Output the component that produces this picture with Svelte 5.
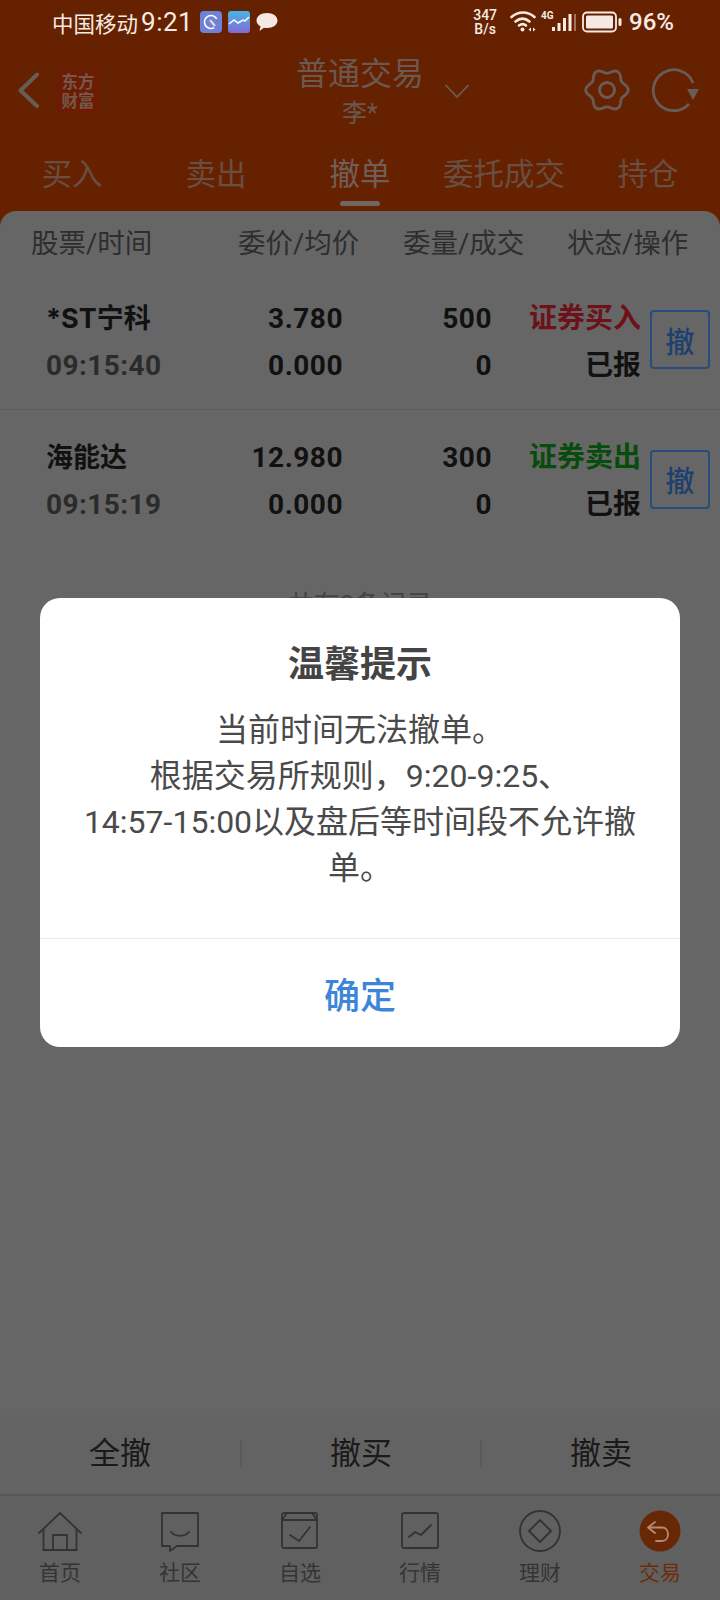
<script>
  const tabs = ['买入', '卖出', '撤单', '委托成交', '持仓'];
  const columns = ['股票/时间', '委价/均价', '委量/成交', '状态/操作'];
  const orders = [
    { name: '*ST宁科', time: '09:15:40', price: '3.780', avg: '0.000', qty: '500', done: '0', side: '证券买入', cls: 'buy' },
    { name: '海能达', time: '09:15:19', price: '12.980', avg: '0.000', qty: '300', done: '0', side: '证券卖出', cls: 'sell' }
  ];
  const actions = ['全撤', '撤买', '撤卖'];
  const nav = ['首页', '社区', '自选', '行情', '理财', '交易'];

  // six soft lobes round the centre, lobes pointing left and right
  const gearPath = Array.from({ length: 121 }, (_, i) => {
    const a = (i / 120) * Math.PI * 2;
    const r = 19 + 2.2 * Math.cos(6 * a);
    return `${i ? 'L' : 'M'}${(24 + r * Math.cos(a)).toFixed(2)} ${(23 + r * Math.sin(a)).toFixed(2)}`;
  }).join('') + 'Z';
</script>

<div class="page">
  <header class="top">
    <div class="status">
      <span class="carrier">中国移动</span>
      <span class="clock">9:21</span>
      <svg class="app" width="22" height="22" viewBox="0 0 22 22">
        <rect width="22" height="22" rx="4" fill="#6d82d8" />
        <circle cx="11" cy="11" r="6.5" fill="none" stroke="#fff" stroke-width="1.6" stroke-dasharray="30 11" transform="rotate(60 11 11)" />
        <path d="M10 9l5 6" stroke="#f2d6c8" stroke-width="2" />
      </svg>
      <svg class="app" width="22" height="22" viewBox="0 0 22 22">
        <defs>
          <linearGradient id="chart" x1="0" y1="0" x2="0" y2="1">
            <stop offset="0" stop-color="#46b6e6" />
            <stop offset="1" stop-color="#8469d6" />
          </linearGradient>
        </defs>
        <rect width="22" height="22" rx="3" fill="url(#chart)" />
        <path d="M1 13l5-4 4 3 5-3 2 1 4-4" fill="none" stroke="#fff" stroke-width="1.5" />
      </svg>
      <svg class="bubble" width="22" height="20" viewBox="0 0 22 20">
        <path d="M11 1c6 0 10.5 3 10.5 7.5S17 16 11 16c-1 0-2 0-3-.3L3.500 19l1-4.700C2 13 .5 11 .5 8.500.5 4 5 1 11 1z" fill="#f4e9e4" />
      </svg>
      <span class="grow"></span>
      <span class="speed">347<br />B/s</span>
      <svg class="wifi" width="26" height="24" viewBox="0 0 26 24" fill="none" stroke="#f7ebe4" stroke-width="2.6" stroke-linecap="round">
        <path d="M1.500 7c7-6 16-6 23 0" />
        <path d="M5.500 11.500c4.500-3.800 9.500-3.800 14 0" />
        <path d="M9 15.500c2.500-1.800 5-1.800 7 0" />
        <circle cx="12.500" cy="19.500" r="2" fill="#f7ebe4" stroke="none" />
        <path d="M21 17.500l-2.500 2 2.500 2zM23 17.500l2.500 2-2.500 2z" fill="#f7ebe4" stroke="none" />
      </svg>
      <svg class="signal" width="36" height="24" viewBox="0 0 36 24">
        <text x="0" y="9" class="net">4G</text>
        <rect x="11" y="17" width="3" height="4" fill="#f7ebe4" />
        <rect x="16.500" y="13" width="3" height="8" fill="#f7ebe4" />
        <rect x="22" y="8" width="3" height="13" fill="#f7ebe4" />
        <rect x="27.500" y="4" width="3" height="17" fill="#f7ebe4" />
        <rect x="33" y="4" width="2" height="17" fill="#a8705a" />
      </svg>
      <svg class="battery" width="40" height="22" viewBox="0 0 40 22">
        <rect x="1" y="1.500" width="33" height="19" rx="4" fill="none" stroke="#f7ebe4" stroke-width="1.8" />
        <rect x="4" y="4.500" width="27" height="13" rx="1.5" fill="#f4e9e4" />
        <rect x="36.500" y="7" width="3" height="8" rx="1.5" fill="#f7ebe4" />
      </svg>
      <span class="percent">96%</span>
    </div>

    <div class="bar">
      <svg class="back" width="24" height="38" viewBox="0 0 24 38" fill="none" stroke="#685c58" stroke-width="4" stroke-linecap="round" stroke-linejoin="round">
        <path d="M19 2.500L2.500 18.500 19 34" />
      </svg>
      <div class="logo"><span>东方</span><span>财富</span></div>
      <div class="title">
        <div class="name">普通交易</div>
        <div class="user">李*</div>
      </div>
      <svg class="caret" width="26" height="16" viewBox="0 0 26 16" fill="none" stroke="#685c58" stroke-width="1.8">
        <path d="M1.500 2L13 14 24.500 2" />
      </svg>
      <span class="grow"></span>
      <svg class="gear" width="48" height="46" viewBox="0 0 48 46" fill="none" stroke="#685c58" stroke-width="2.8">
        <path d={gearPath} />
        <circle cx="24" cy="23" r="7.5" />
      </svg>
      <svg class="refresh" width="50" height="46" viewBox="0 0 50 46" fill="none">
        <path d="M39 37A20.500 20.500 0 1 1 43 16" stroke="#685c58" stroke-width="2.8" />
        <path d="M37 22h12l-6 11z" fill="#685c58" />
      </svg>
    </div>

    <nav class="tabs">
      {#each tabs as tab, i}
        <div class="tab" class:active={i === 2}>{tab}</div>
      {/each}
    </nav>
  </header>

  <main class="panel">
    <div class="thead">
      {#each columns as col}
        <span>{col}</span>
      {/each}
    </div>

    {#each orders as o}
      <div class="row">
        <div class="cell stock">
          <b>{o.name}</b>
          <b class="time">{o.time}</b>
        </div>
        <div class="cell num price">
          <b>{o.price}</b>
          <b>{o.avg}</b>
        </div>
        <div class="cell num qty">
          <b>{o.qty}</b>
          <b>{o.done}</b>
        </div>
        <div class="cell num state">
          <b class={o.cls}>{o.side}</b>
          <b>已报</b>
        </div>
        <div class="cancel">撤</div>
      </div>
    {/each}

    <div class="count">共有2条记录</div>
    <span class="grow"></span>

    <div class="actions">
      {#each actions as a}
        <div class="action">{a}</div>
      {/each}
    </div>

    <footer class="nav">
      {#each nav as label, i}
        <div class="item" class:on={i === 5}>
          <svg width="48" height="46" viewBox="0 0 48 46" fill="none" stroke="#333" stroke-width="1.8" stroke-linejoin="round" stroke-linecap="round">
            {#if i === 0}
              <path d="M3 23L24 3l21 20" />
              <path d="M7.500 19v21h33V19M17 40V25h14v15" />
            {:else if i === 1}
              <path d="M6 3h36v33H21l-7 5v-5H6z" />
              <path d="M15 22c4 5 14 5 18 0" />
            {:else if i === 2}
              <rect x="6" y="3" width="35" height="35" rx="2" />
              <path d="M6 10l5-7h25l5 7z" />
              <path d="M14 25l9 6 11-14" />
            {:else if i === 3}
              <rect x="6" y="3" width="36" height="35" rx="2" />
              <path d="M13 27l6-5 6 3 10-10" />
            {:else if i === 4}
              <circle cx="24" cy="21" r="20" />
              <path d="M24 10l11 11-11 11-11-11z" />
            {:else}
              <circle cx="24" cy="21" r="20.500" fill="#682806" stroke="none" />
              <path d="M19 12l-7 5.500 7 5.500M12 17.500h14c8 0 8 13.500 0 13.500h-6" stroke="#b98a72" />
            {/if}
          </svg>
          <span>{label}</span>
        </div>
      {/each}
    </footer>
  </main>

  <div class="dialog">
    <h2>温馨提示</h2>
    <p>当前时间无法撤单。<br />根据交易所规则，9:20-9:25、<br />14:57-15:00以及盘后等时间段不允许撤<br />单。</p>
    <div class="ok">确定</div>
  </div>
</div>

<style>
  :global(body) {
    margin: 0;
    background: #662200;
  }

  .page {
    position: relative;
    width: 720px;
    height: 1600px;
    display: flex;
    flex-direction: column;
    overflow: hidden;
    font-family: Roboto, "Noto Sans CJK SC", sans-serif;
    color: #111;
  }

  .grow {
    flex: 1;
  }

  /* orange header, dimmed by the dialog */
  .top {
    height: 212px;
    flex: none;
    background: #662200;
    margin-bottom: -1px;
  }

  .status {
    height: 44px;
    padding: 0 46px 2px 52px;
    display: flex;
    align-items: center;
    color: #f7ebe4;
  }

  .carrier {
    font-size: 21.5px;
  }

  .clock {
    font-size: 26px;
    margin: 0 7px 0 3px;
    letter-spacing: 0.5px;
  }

  .app {
    margin-right: 6px;
  }

  .speed {
    font-size: 14px;
    font-weight: 500;
    line-height: 14px;
    text-align: center;
    margin-right: 13px;
  }

  .wifi {
    margin-right: 5px;
  }

  .net {
    font-family: Roboto, sans-serif;
    font-size: 10px;
    font-weight: 700;
    fill: #f7ebe4;
  }

  .signal {
    margin-right: 5px;
  }

  .battery {
    margin-right: 7px;
  }

  .percent {
    font-size: 24px;
    font-weight: 500;
  }

  .bar {
    height: 88px;
    padding: 0 20px 0 18px;
    display: flex;
    align-items: center;
    color: #6b5850;
  }

  .back {
    margin-right: 14px;
    margin-top: 2px;
  }

  .logo {
    width: 44px;
    height: 44px;
    border-radius: 6px;
    background: #6c1c02;
    display: flex;
    flex-direction: column;
    align-items: center;
    justify-content: center;
    margin-top: 2px;
    font-family: "Noto Sans CJK SC", sans-serif;
    font-size: 16.5px;
    font-weight: 700;
    line-height: 19px;
    color: #75584a;
  }

  .title {
    width: 128px;
    margin-left: 196px;
    text-align: center;
    padding-top: 3px;
  }

  .name {
    font-size: 32px;
    line-height: 40px;
    white-space: nowrap;
  }

  .user {
    margin-top: 5px;
    font-size: 25px;
    line-height: 30px;
  }

  .caret {
    margin-left: 20px;
    margin-top: 1px;
  }

  .gear {
    margin-right: 19px;
  }

  .tabs {
    height: 80px;
    display: grid;
    grid-template-columns: repeat(5, 1fr);
  }

  .tab {
    position: relative;
    text-align: center;
    font-size: 30.5px;
    line-height: 82px;
    color: #684e43;
  }

  .tab.active {
    color: #6f5f58;
  }

  .tab.active::after {
    content: '';
    position: absolute;
    left: 52px;
    right: 52px;
    top: 67px;
    height: 5px;
    border-radius: 3px;
    background: #706763;
  }

  .panel {
    flex: 1;
    background: #666;
    border-radius: 16px 16px 0 0;
    display: flex;
    flex-direction: column;
    min-height: 0;
  }

  .thead {
    height: 59px;
    display: grid;
    grid-template-columns: 207px 165px 164px 1fr;
    padding-left: 31px;
    align-items: center;
    font-size: 27.5px;
    color: #2e2e2e;
    white-space: nowrap;
  }

  .row {
    height: 139px;
    box-sizing: border-box;
    display: grid;
    grid-template-columns: 46px 161px 136px 149px 149px 1fr;
    align-items: center;
    font-size: 28px;
  }

  .row + .row {
    border-top: 1px solid #5c5c5c;
  }

  .cell {
    display: flex;
    flex-direction: column;
    gap: 7px;
    white-space: nowrap;
    margin-top: 5px;
  }

  .cell b {
    line-height: 40px;
    font-size: 28px;
    font-weight: 700;
  }

  .stock {
    grid-column: 2;
  }

  .num {
    text-align: right;
  }

  .stock b:first-child {
    font-family: Inter, "Noto Sans CJK SC", sans-serif;
    font-size: 27px;
  }

  .cell .time {
    color: #2b2b2b;
    letter-spacing: 0.4px;
  }

  .price b,
  .qty b {
    letter-spacing: 0.5px;
  }

  .cell .buy {
    color: #6c1218;
  }

  .cell .sell {
    color: #084c0c;
  }

  .cancel {
    width: 60px;
    height: 59px;
    box-sizing: border-box;
    margin-left: 9px;
    border: 2px solid #264d7c;
    border-radius: 4px;
    display: flex;
    align-items: center;
    justify-content: center;
    color: #1e406e;
    font-size: 29px;
    font-weight: 500;
  }

  .count {
    text-align: center;
    font-size: 26px;
    line-height: 40px;
    margin-top: 37px;
    color: #444;
  }

  .actions {
    height: 79px;
    box-sizing: border-box;
    padding-top: 25px;
    display: grid;
    grid-template-columns: repeat(3, 240px);
    background: #636363;
    font-size: 31px;
  }

  .action {
    text-align: center;
    color: #1a1a1a;
    border-left: 2px solid #5a5a5a;
    height: 28px;
    line-height: 28px;
  }

  .action:first-child {
    border-left: none;
  }

  .nav {
    height: 106px;
    box-sizing: border-box;
    display: grid;
    grid-template-columns: repeat(6, 120px);
    border-top: 2px solid #565656;
    background: #606060;
    padding-top: 14px;
  }

  .item {
    display: flex;
    flex-direction: column;
    align-items: center;
    color: #343434;
    font-size: 21px;
    line-height: 26px;
  }

  .item span {
    margin-top: 4px;
  }

  .item.on {
    color: #6c2c0a;
  }

  /* modal sits over the list */
  .dialog {
    position: absolute;
    left: 40px;
    top: 598px;
    width: 640px;
    height: 449px;
    border-radius: 20px;
    background: #fff;
    color: #444;
    text-align: center;
    display: flex;
    flex-direction: column;
  }

  h2 {
    margin: 44px 0 0;
    font-size: 36px;
    line-height: 46px;
    font-weight: 700;
  }

  p {
    margin: 19px 0 0;
    height: 184px;
    font-size: 32px;
    line-height: 46px;
    white-space: nowrap;
    color: #4a4a4a;
  }

  .ok {
    margin-top: 47px;
    flex: 1;
    border-top: 1px solid #ebebeb;
    display: flex;
    align-items: center;
    justify-content: center;
    font-size: 36px;
    font-weight: 500;
    color: #3d85d8;
  }
</style>
